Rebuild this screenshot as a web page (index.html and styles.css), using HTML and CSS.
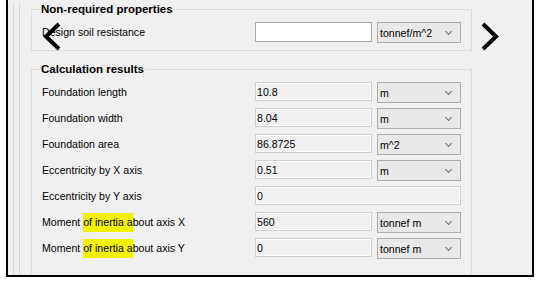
FILE: index.html
```html
<!DOCTYPE html>
<html lang="en">
  <head>
    <meta charset="UTF-8" />
    <meta name="viewport" content="width=device-width, initial-scale=1.0" />
    <title>Foundation properties</title>
    <link rel="stylesheet" href="styles.css">
  </head>
  <body>
    <div class="window">
      <div class="scroll">
        <div class="inner">
          <fieldset class="group group-first">
            <legend>Non-required properties</legend>
            <div class="rows">
              <label class="row-label" for="soilResistance">Design soil resistance</label>
              <input class="field" type="text" id="soilResistance" />
              <div class="unit">tonnef/m^2<span class="chev"></span></div>
            </div>
          </fieldset>

          <fieldset class="group group-last">
            <legend>Calculation results</legend>
            <div class="rows">
              <label class="row-label">Foundation length</label>
              <input class="field readonly" type="text" value="10.8" readonly />
              <div class="unit">m<span class="chev"></span></div>

              <label class="row-label">Foundation width</label>
              <input class="field readonly" type="text" value="8.04" readonly />
              <div class="unit">m<span class="chev"></span></div>

              <label class="row-label">Foundation area</label>
              <input class="field readonly" type="text" value="86.8725" readonly />
              <div class="unit">m^2<span class="chev"></span></div>

              <label class="row-label">Eccentricity by X axis</label>
              <input class="field readonly" type="text" value="0.51" readonly />
              <div class="unit">m<span class="chev"></span></div>

              <label class="row-label">Eccentricity by Y axis</label>
              <input class="field readonly wide" type="text" value="0" readonly />

              <label class="row-label">Moment <mark>of inertia a</mark>bout axis X</label>
              <input class="field readonly" type="text" value="560" readonly />
              <div class="unit">tonnef m<span class="chev"></span></div>

              <label class="row-label">Moment <mark>of inertia a</mark>bout axis Y</label>
              <input class="field readonly" type="text" value="0" readonly />
              <div class="unit">tonnef m<span class="chev"></span></div>
            </div>
          </fieldset>
        </div>
      </div>

      <svg class="nav nav-prev" width="20" height="30" viewBox="0 0 20 30">
        <polyline points="17,2 4,14.5 17,27" fill="none" stroke="#000" stroke-width="4" />
      </svg>
      <svg class="nav nav-next" width="20" height="30" viewBox="0 0 20 30">
        <polyline points="3,2 16,14.5 3,27" fill="none" stroke="#000" stroke-width="4" />
      </svg>
    </div>
  </body>
</html>
```

FILE: styles.css
```css
* {
  margin: 0;
  padding: 0;
  box-sizing: border-box;
}
body {
  font-family: "Liberation Sans", Arial, sans-serif;
  font-size: 10.6px;
  background-color: #fff;
  color: #000;
}

.window {
  position: relative;
  margin-left: 6px;
  width: 528px;
  height: 277px;
  border: 2px solid #000;
  border-top: none;
  background-color: #f0f0f0;
  overflow: hidden;
}

.scroll {
  margin-left: 5px;
  height: 100%;
  border-left: 1px solid #d9d9d9;
}

.inner {
  margin-left: 5px;
  height: 100%;
  border-left: 1px solid #d9d9d9;
  padding-left: 11px;
}

.group {
  width: 441px;
  border: 1px solid #dcdcdc;
  padding: 6px 10px 8px 10px;
  margin-top: 11px;
}
.group-first {
  margin-top: 2px;
}
.group-last {
  padding-bottom: 40px;
}

legend {
  font-size: 11.5px;
  font-weight: bold;
  line-height: 14px;
  padding: 0 1px;
  margin-left: -2px;
}

.rows {
  display: grid;
  grid-template-columns: 208px 117px 84px;
  grid-auto-rows: 20px;
  row-gap: 6px;
  column-gap: 5px;
  align-items: center;
}

.row-label {
  line-height: 20px;
  white-space: nowrap;
}

mark {
  background-color: #f2f200;
  color: inherit;
  padding: 3px 0 4px;
}

.field {
  height: 20px;
  border: 1px solid #a9a9a9;
  background-color: #fff;
  font: inherit;
  padding: 0 1px;
  outline: none;
}
.field.readonly {
  height: 19px;
  align-self: start;
  background-color: #f0f0f0;
  border-color: #cfcfcf;
  box-shadow: inset 0 0 0 1px #fff;
}
.field.wide {
  grid-column: span 2;
}

.unit {
  position: relative;
  height: 21px;
  line-height: 20px;
  border: 1px solid #acacac;
  background-color: #e8e8e8;
  padding-left: 2px;
}
.chev {
  position: absolute;
  right: 9px;
  top: 6px;
  width: 5px;
  height: 5px;
  border-right: 1.5px solid #6d6d6d;
  border-bottom: 1.5px solid #6d6d6d;
  transform: rotate(45deg);
}

.nav {
  position: absolute;
  top: 22px;
}
.nav-prev {
  left: 34px;
}
.nav-next {
  left: 472px;
}
```
